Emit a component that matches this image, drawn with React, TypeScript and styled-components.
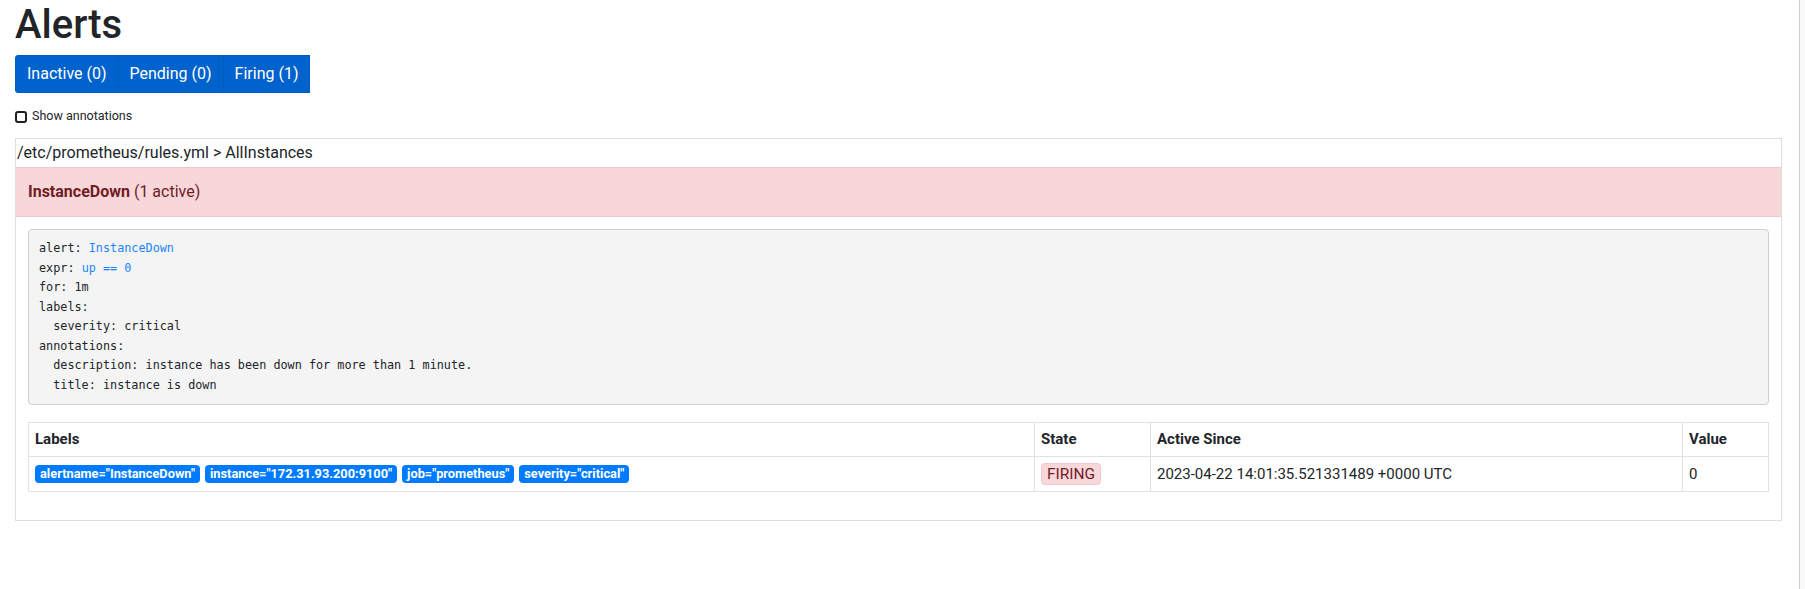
import React from 'react';
import styled, { createGlobalStyle } from 'styled-components';

const GlobalStyle = createGlobalStyle`
  html, body {
    margin: 0;
    padding: 0;
    background: #ffffff;
  }
  body {
    font-family: Roboto, "Segoe UI", "Liberation Sans", sans-serif;
    font-size: 16px;
    line-height: 1.5;
    color: #212529;
  }
  *, *::before, *::after {
    box-sizing: border-box;
  }
`;

const Shell = styled.div`
  display: flex;
  min-height: 100vh;
`;

const Page = styled.main`
  flex: 1;
  min-width: 0;
  padding: 1px 17px 0 15px;
`;

const ScrollTrack = styled.div`
  flex: none;
  width: 6px;
  border-left: 1px solid #cdcdcd;
  background: #f9f9f9;
`;

const Title = styled.h1`
  margin: 0 0 6px;
  font-size: 40px;
  line-height: 48px;
  font-weight: 500;
  color: #212529;
`;

const ButtonGroup = styled.div`
  display: inline-flex;
  border-radius: 4px 0 0 4px;
  overflow: hidden;
`;

const FilterButton = styled.button`
  font-family: inherit;
  font-size: 16px;
  line-height: 24px;
  padding: 6px 11px;
  color: #ffffff;
  background: #0062cc;
  border: 1px solid #005cbf;
  margin-left: -1px;
  cursor: pointer;

  &:first-child {
    margin-left: 0;
  }
`;

const CheckRow = styled.label`
  display: flex;
  align-items: center;
  gap: 5px;
  margin: 14px 0 12px;
  height: 19px;
  font-size: 12.5px;
  color: #212529;
`;

const CheckBox = styled.input`
  appearance: none;
  margin: 0;
  width: 12px;
  height: 12px;
  border: 2px solid #1f1f1f;
  border-radius: 3px;
  background: #ffffff;
`;

const GroupCard = styled.section`
  border: 1px solid #dfdfdf;
`;

const GroupHeader = styled.div`
  padding: 2px 1px;
  line-height: 24px;
  font-size: 16px;
`;

const RuleAlert = styled.div`
  padding: 12px;
  line-height: 24px;
  color: #721c24;
  background: #f8d7da;
  border: 1px solid #f5c6cb;
  border-left: none;
  border-right: none;

  strong {
    font-weight: 700;
  }
`;

const RuleBody = styled.div`
  padding: 12px;
`;

const RuleDefinition = styled.pre`
  margin: 0 0 17px;
  padding: 9px 10px;
  font-family: "DejaVu Sans Mono", "Liberation Mono", monospace;
  font-size: 11.8px;
  line-height: 19.5px;
  color: #212529;
  background: #f4f4f4;
  border: 1px solid #cfcfcf;
  border-radius: 4px;
`;

const Token = styled.span`
  color: #1a85ff;
`;

const LabelsTable = styled.table`
  width: 100%;
  border-collapse: collapse;
  table-layout: fixed;
  margin-bottom: 16px;
  font-size: 15px;
`;

const Th = styled.th<{ $width?: number }>`
  width: ${({ $width }) => ($width ? `${$width}px` : 'auto')};
  padding: 6px;
  line-height: 21px;
  text-align: left;
  font-weight: 700;
  border: 1px solid #dee2e6;
`;

const Td = styled.td`
  padding: 6px;
  line-height: 21px;
  vertical-align: middle;
  border: 1px solid #dee2e6;
`;

const BadgeList = styled.div`
  display: flex;
  flex-wrap: wrap;
  gap: 5px;
`;

const LabelBadge = styled.span`
  display: inline-block;
  padding: 0 5px;
  height: 18px;
  line-height: 18px;
  font-size: 12.8px;
  font-weight: 700;
  color: #ffffff;
  background: #007bff;
  border-radius: 4px;
  white-space: nowrap;
`;

const StateBadge = styled.span`
  display: inline-block;
  padding: 0 5px;
  line-height: 20px;
  font-size: 15.5px;
  color: #721c24;
  background: #f8d7da;
  border: 1px solid #f5c6cb;
  border-radius: 4px;
`;

const labels: [string, string][] = [
  ['alertname', 'InstanceDown'],
  ['instance', '172.31.93.200:9100'],
  ['job', 'prometheus'],
  ['severity', 'critical'],
];

const App: React.FC = () => {
  return (
    <Shell>
      <GlobalStyle />
      <Page>
        <Title>Alerts</Title>
        <ButtonGroup>
          <FilterButton>Inactive (0)</FilterButton>
          <FilterButton>Pending (0)</FilterButton>
          <FilterButton>Firing (1)</FilterButton>
        </ButtonGroup>
        <CheckRow>
          <CheckBox type="checkbox" />
          Show annotations
        </CheckRow>
        <GroupCard>
          <GroupHeader>/etc/prometheus/rules.yml &gt; AllInstances</GroupHeader>
          <RuleAlert>
            <strong>InstanceDown</strong> (1 active)
          </RuleAlert>
          <RuleBody>
            <RuleDefinition>
              {'alert: '}
              <Token>InstanceDown</Token>
              {'\nexpr: '}
              <Token>up == 0</Token>
              {'\nfor: 1m\nlabels:\n  severity: critical\nannotations:\n  description: instance has been down for more than 1 minute.\n  title: instance is down'}
            </RuleDefinition>
            <LabelsTable>
              <thead>
                <tr>
                  <Th>Labels</Th>
                  <Th $width={116}>State</Th>
                  <Th $width={532}>Active Since</Th>
                  <Th $width={86}>Value</Th>
                </tr>
              </thead>
              <tbody>
                <tr>
                  <Td>
                    <BadgeList>
                      {labels.map(([k, v]) => (
                        <LabelBadge key={k}>
                          {k}="{v}"
                        </LabelBadge>
                      ))}
                    </BadgeList>
                  </Td>
                  <Td>
                    <StateBadge>FIRING</StateBadge>
                  </Td>
                  <Td>2023-04-22 14:01:35.521331489 +0000 UTC</Td>
                  <Td>0</Td>
                </tr>
              </tbody>
            </LabelsTable>
          </RuleBody>
        </GroupCard>
      </Page>
      <ScrollTrack />
    </Shell>
  );
};

export default App;
